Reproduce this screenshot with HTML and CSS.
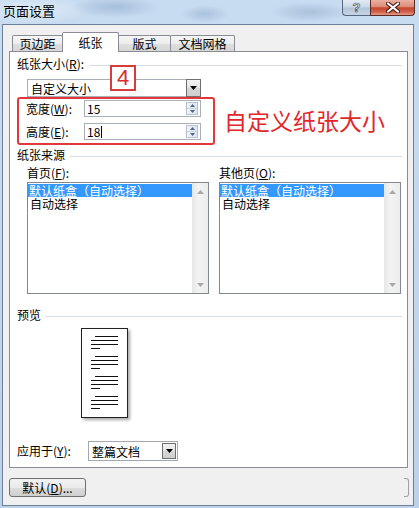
FILE: index.html
```html
<!DOCTYPE html>
<html lang="zh-CN">
<head>
<meta charset="utf-8">
<title>页面设置</title>
<link rel="stylesheet" href="styles.css">
</head>
<body>
<div class="window">
  <div class="titlebar">
    <span class="title">页面设置</span>
    <div class="caption">
      <div class="cap-btn cap-help"><span class="help-glyph">?</span></div>
      <div class="cap-btn cap-close">
        <svg width="14" height="11" viewBox="0 0 14 11"><path class="x-outline" d="M2 1.5 L12 9.5 M12 1.5 L2 9.5"/><path class="x-fill" d="M2 1.5 L12 9.5 M12 1.5 L2 9.5"/></svg>
      </div>
    </div>
  </div>
  <div class="client">
    <div class="tabs">
      <div class="tab tab-margins">页边距</div>
      <div class="tab tab-paper active">纸张</div>
      <div class="tab tab-layout">版式</div>
      <div class="tab tab-grid">文档网格</div>
    </div>
    <div class="panel">
      <div class="group-head gh-size"><span>纸张大小(<u>R</u>):</span><i class="rule"></i></div>
      <div class="combo combo-size">
        <span class="combo-text">自定义大小</span>
        <span class="combo-btn"><svg width="7" height="4" viewBox="0 0 7 4"><path d="M0 0H7L3.5 4Z"/></svg></span>
      </div>
      <div class="field-row row-w">
        <span class="field-label">宽度(<u>W</u>):</span>
        <div class="spin-input">
          <span class="value">15</span>
          <div class="spin">
            <span class="spin-half"><svg width="5" height="3" viewBox="0 0 5 3"><path d="M0 3H5L2.5 0Z"/></svg></span>
            <span class="spin-half"><svg width="5" height="3" viewBox="0 0 5 3"><path d="M0 0H5L2.5 3Z"/></svg></span>
          </div>
        </div>
      </div>
      <div class="field-row row-h">
        <span class="field-label">高度(<u>E</u>):</span>
        <div class="spin-input">
          <span class="value">18<span class="caret"></span></span>
          <div class="spin">
            <span class="spin-half"><svg width="5" height="3" viewBox="0 0 5 3"><path d="M0 3H5L2.5 0Z"/></svg></span>
            <span class="spin-half"><svg width="5" height="3" viewBox="0 0 5 3"><path d="M0 0H5L2.5 3Z"/></svg></span>
          </div>
        </div>
      </div>
      <div class="group-head gh-source"><span>纸张来源</span><i class="rule"></i></div>
      <div class="sources">
        <div class="source-col">
          <div class="col-label">首页(<u>F</u>):</div>
          <div class="listbox">
            <div class="items">
              <div class="item selected">默认纸盒（自动选择）</div>
              <div class="item">自动选择</div>
            </div>
            <div class="vscroll">
              <span class="arrow"><svg width="7" height="4" viewBox="0 0 7 4"><path d="M0 4H7L3.5 0Z"/></svg></span>
              <span class="arrow"><svg width="7" height="4" viewBox="0 0 7 4"><path d="M0 0H7L3.5 4Z"/></svg></span>
            </div>
          </div>
        </div>
        <div class="source-col">
          <div class="col-label">其他页(<u>O</u>):</div>
          <div class="listbox">
            <div class="items">
              <div class="item selected">默认纸盒（自动选择）</div>
              <div class="item">自动选择</div>
            </div>
            <div class="vscroll">
              <span class="arrow"><svg width="7" height="4" viewBox="0 0 7 4"><path d="M0 4H7L3.5 0Z"/></svg></span>
              <span class="arrow"><svg width="7" height="4" viewBox="0 0 7 4"><path d="M0 0H7L3.5 4Z"/></svg></span>
            </div>
          </div>
        </div>
      </div>
      <div class="group-head gh-preview"><span>预览</span><i class="rule"></i></div>
      <div class="preview-page">
        <svg width="45" height="88" viewBox="0 0 45 88">
          <g class="text-lines">
            <path d="M13 7.5H36M9 11.5H36M9 15.5H36M9 19.5H18"/>
            <path d="M13 27.5H36M9 31.5H36M9 35.5H36M9 39.5H18"/>
            <path d="M13 47.5H36M9 51.5H36M9 55.5H36M9 59.5H18"/>
            <path d="M13 67.5H36M9 71.5H36M9 75.5H36M9 79.5H18"/>
          </g>
        </svg>
      </div>
      <div class="apply-row">
        <span class="apply-label">应用于(<u>Y</u>):</span>
        <div class="combo combo-apply">
          <span class="combo-text">整篇文档</span>
          <span class="combo-btn"><svg width="7" height="4" viewBox="0 0 7 4"><path d="M0 0H7L3.5 4Z"/></svg></span>
        </div>
      </div>
      <div class="note-num">4</div>
      <div class="note-box"></div>
      <div class="note-text">自定义纸张大小</div>
    </div>
    <div class="button-row">
      <button class="btn">默认(<u>D</u>)...</button>
      <span class="btn-edge"></span>
    </div>
  </div>
</div>
</body>
</html>
```

FILE: styles.css
```css
* { box-sizing: border-box; }
html, body { margin: 0; padding: 0; }
body {
  width: 419px;
  height: 508px;
  overflow: hidden;
  font-family: "Noto Sans CJK SC", "Noto Sans", sans-serif;
  font-size: 12px;
  color: #000;
  background: #c2d7ee;
}
u { text-decoration: underline; text-underline-offset: 1px; }

.window {
  width: 419px;
  height: 508px;
  display: flex;
  flex-direction: column;
  background:
    radial-gradient(ellipse 45px 11px at 115px 7px, rgba(105,135,175,.35), transparent),
    radial-gradient(ellipse 25px 9px at 205px 14px, rgba(105,135,175,.3), transparent),
    radial-gradient(ellipse 40px 10px at 310px 12px, rgba(100,130,170,.3), transparent),
    radial-gradient(ellipse 60px 14px at 30px 10px, rgba(235,243,251,.7), transparent),
    linear-gradient(#c8dcf1, #bcd2ea);
}

/* title bar */
.titlebar {
  height: 24px;
  flex: none;
  display: flex;
  justify-content: space-between;
  align-items: flex-start;
  padding: 0 4px 0 3px;
}
.title {
  font-size: 13px;
  line-height: 13px;
  margin-top: 4px;
  color: #000;
}
.caption { display: flex; }
.cap-btn {
  height: 16px;
  display: flex;
  align-items: center;
  justify-content: center;
  border: 1px solid #56667d;
  border-top: none;
}
.cap-help {
  width: 28px;
  border-radius: 0 0 0 4px;
  border-right: none;
  background: linear-gradient(#e2eaf4, #cbd7e6 48%, #b3c3d8 52%, #c6d4e6);
}
.help-glyph {
  font-family: "Liberation Sans", sans-serif;
  font-weight: bold;
  font-size: 13px;
  line-height: 13px;
  color: #f4f7fb;
  -webkit-text-stroke: 0.7px #44546b;
}
.cap-close {
  width: 45px;
  border-color: #5a2a24;
  border-radius: 0 0 4px 0;
  background: linear-gradient(#ebb0a2, #dc8b78 45%, #c7462f 52%, #d0604a 78%, #e59a86);
}
.x-outline { stroke: #4d1e17; stroke-width: 4.2; stroke-linecap: round; fill: none; }
.x-fill { stroke: #fff; stroke-width: 2.2; stroke-linecap: round; fill: none; }

/* client */
.client {
  flex: 1;
  margin: 0 5px 2px 2px;
  border: 1px solid #6d7f97;
  background: #f0f0f0;
  padding: 7px 5px 0 6px;
  display: flex;
  flex-direction: column;
}

.tabs {
  display: flex;
  align-items: flex-end;
  height: 20px;
  margin-bottom: -1px;
  padding-left: 3px;
}
.tab {
  height: 17px;
  padding-top: 1px;
  line-height: 14px;
  text-align: center;
  border: 1px solid #898c95;
  border-bottom: none;
  border-radius: 2px 2px 0 0;
  background: linear-gradient(#f6f6f6, #ececec 50%, #dedede 51%, #d6d6d6);
}
.tab-margins { width: 51px; }
.tab-paper { width: 57px; margin-left: -1px; }
.tab-layout { width: 53px; margin-left: -1px; }
.tab-grid { width: 65px; margin-left: -1px; }
.tab.active {
  height: 20px;
  padding-top: 3px;
  background: #fff;
  position: relative;
  z-index: 2;
}

.panel {
  position: relative;
  height: 417px;
  border: 1px solid #898c95;
  background: #fff;
  padding: 0 5px 0 7px;
}

.group-head {
  display: flex;
  align-items: center;
  height: 14px;
  line-height: 14px;
}
.rule {
  flex: 1;
  height: 1px;
  margin: 2px 0 0 5px;
  background: #d5dfe5;
}
.gh-size { margin-top: 5px; }
.gh-source { margin-top: 8px; }
.gh-preview { margin-top: 14px; }

/* combos */
.combo {
  display: flex;
  align-items: stretch;
  border: 1px solid #a9afb8;
  background: #fff;
}
.combo-text {
  flex: 1;
  padding-left: 3px;
  display: flex;
  align-items: center;
  white-space: nowrap;
}
.combo-btn {
  width: 15px;
  display: flex;
  align-items: center;
  justify-content: center;
  border: 1px solid #6f6f6f;
  background: linear-gradient(#f2f2f2, #e4e4e4 50%, #d6d6d6 51%, #cfcfcf);
}
.combo-btn path { fill: #000; }
.combo-size {
  width: 174px;
  height: 18px;
  margin: 8px 0 0 10px;
}
.combo-size .combo-btn { margin: -1px -1px -1px 0; }

/* fields */
.field-row {
  display: flex;
  align-items: center;
  height: 17px;
  margin-left: 9px;
}
.row-w { margin-top: 3px; }
.row-h { margin-top: 6px; }
.field-label { width: 58px; line-height: 14px; }
.spin-input {
  width: 117px;
  height: 17px;
  border: 1px solid #a9afb8;
  display: flex;
  align-items: center;
  justify-content: space-between;
  padding: 0 2px 0 2px;
}
.value { line-height: 14px; display: flex; align-items: center; }
.caret {
  display: inline-block;
  width: 1px;
  height: 12px;
  margin-left: 1px;
  background: #000;
}
.spin {
  width: 12px;
  height: 13px;
  display: flex;
  flex-direction: column;
  border: 1px solid #b9c2ce;
  background: linear-gradient(90deg, #eef2f7, #dde5ef);
}
.spin-half {
  flex: 1;
  display: flex;
  align-items: center;
  justify-content: center;
}
.spin-half + .spin-half { border-top: 1px solid #c9d1dc; }
.spin-half path { fill: #4f6286; }

/* paper source */
.sources {
  display: grid;
  grid-template-columns: 182px 182px;
  column-gap: 10px;
  margin: 4px 0 0 10px;
}
.col-label { height: 14px; line-height: 14px; }
.listbox {
  margin-top: 2px;
  height: 112px;
  border: 1px solid #828790;
  display: flex;
  padding: 1px 0 0 0;
  background: #fff;
}
.items { flex: 1; padding-top: 0; }
.item {
  height: 13px;
  line-height: 13px;
  padding-left: 1px;
  white-space: nowrap;
}
.item.selected { background: #3399ff; color: #fff; }
.item + .item { padding-left: 2px; }
.vscroll {
  width: 16px;
  margin-top: -1px;
  display: flex;
  flex-direction: column;
  justify-content: space-between;
  background: linear-gradient(90deg, #e6e6e6, #f3f3f3 40%, #ececec);
}
.arrow {
  height: 17px;
  display: flex;
  align-items: center;
  justify-content: center;
}
.arrow path { fill: #a8a8a8; }

/* preview */
.preview-page {
  width: 47px;
  height: 90px;
  margin: 6px 0 0 64px;
  border: 1px solid #222;
  background: #fff;
  box-shadow: 2px 2px 3px rgba(0,0,0,.35);
}
.preview-page svg { display: block; }
.text-lines path { stroke: #111; stroke-width: 1.2; fill: none; }

/* apply */
.apply-row {
  display: flex;
  align-items: center;
  margin-top: 23px;
  height: 20px;
}
.apply-label { width: 71px; line-height: 14px; }
.combo-apply {
  width: 90px;
  height: 20px;
  padding: 1px;
  border-color: #a2a8b2;
}
.combo-apply .combo-text { padding-left: 2px; }
.combo-apply .combo-btn { width: 14px; }

/* annotations */
.note-num {
  position: absolute;
  left: 100px;
  top: 13px;
  width: 26px;
  height: 26px;
  border: 2px solid #d83c3c;
  background: #fff;
  color: #d32f2f;
  font-family: "Liberation Sans", sans-serif;
  font-size: 22px;
  line-height: 22px;
  text-align: center;
}
.note-box {
  position: absolute;
  left: 7px;
  top: 45px;
  width: 198px;
  height: 48px;
  border: 2px solid #e2383b;
  border-radius: 3px;
}
.note-text {
  position: absolute;
  left: 214px;
  top: 57px;
  font-size: 23px;
  line-height: 23px;
  color: #e0282c;
  white-space: nowrap;
}

/* bottom buttons */
.button-row {
  display: flex;
  justify-content: space-between;
  margin-top: 10px;
  margin-right: -1px;
}
.btn {
  width: 77px;
  height: 19px;
  padding: 0 0 0 0;
  font-family: inherit;
  font-size: 12px;
  line-height: 14px;
  color: #000;
  border: 1px solid #707070;
  border-radius: 3px;
  background: linear-gradient(#f2f2f2, #ebebeb 50%, #dddddd 51%, #cfcfcf);
}
.btn-edge {
  width: 5px;
  height: 19px;
  border: 1px solid #a0a0a0;
  border-left: none;
  border-radius: 0 3px 3px 0;
}
```
